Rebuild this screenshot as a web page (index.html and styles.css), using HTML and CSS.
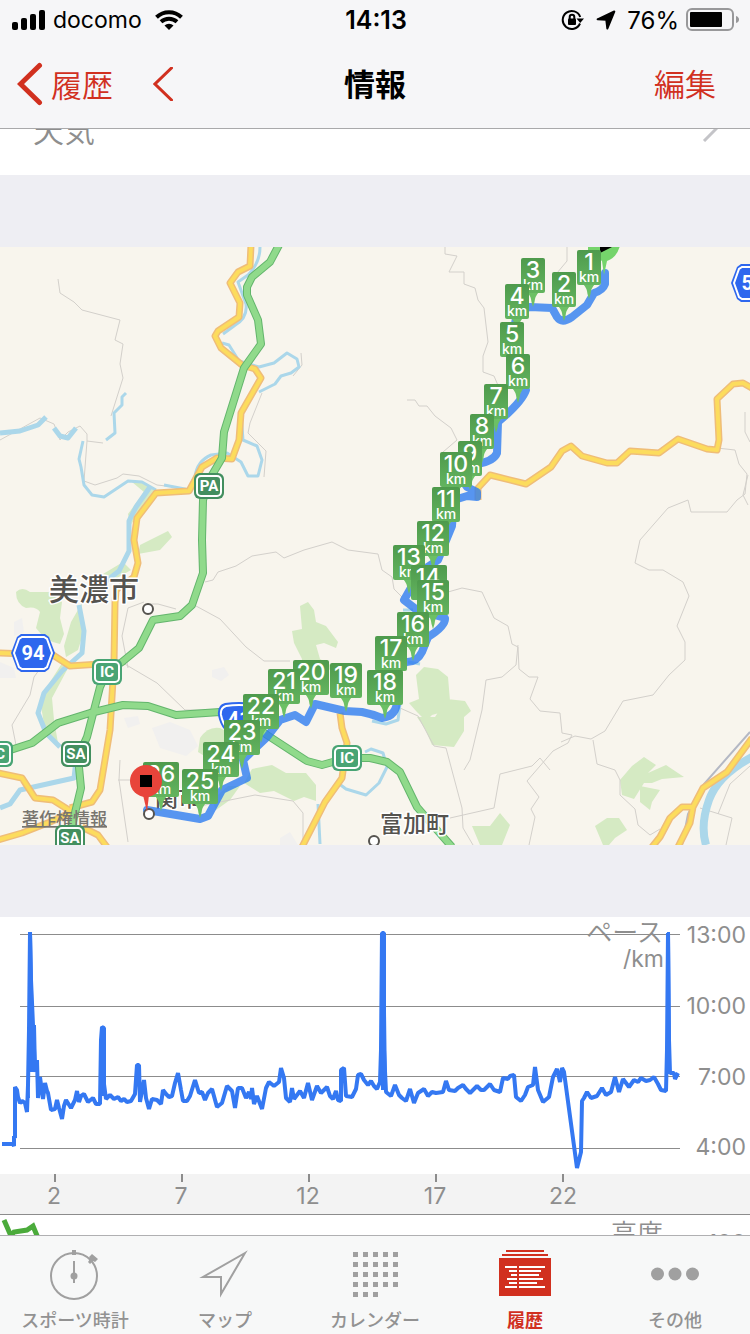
FILE: index.html
```html
<!DOCTYPE html>
<html lang="ja">
<head>
  <meta charset="UTF-8" />
  <meta name="viewport" content="width=device-width, initial-scale=1" />
  <title>情報</title>
  <link rel="stylesheet" href="styles.css">
</head>
<body>
  <header class="header">
    <div class="status">
      <div class="status-left">
        <svg width="34" height="22" viewBox="0 0 34 22" aria-hidden="true">
          <rect x="0" y="13" width="6" height="8" rx="2" />
          <rect x="9" y="9" width="6" height="12" rx="2" />
          <rect x="18" y="5" width="6" height="16" rx="2" />
          <rect x="27" y="1" width="6" height="20" rx="2" />
        </svg>
        <span class="carrier">docomo</span>
        <svg width="28" height="20" viewBox="0 0 28 20" aria-hidden="true">
          <path d="M14 20L9.500 15.500A6.500 6.500 0 0 1 18.500 15.500Z" />
          <path class="wave" d="M1.500 7.200A18 18 0 0 1 26.500 7.200M6 11.800A12 12 0 0 1 22 11.800" />
        </svg>
      </div>
      <time class="clock">14:13</time>
      <div class="status-right">
        <svg width="24" height="22" viewBox="0 0 24 22" aria-hidden="true">
          <path class="line" d="M19 14.500A9 9 0 1 1 19.200 8" />
          <path d="M15.500 9.500h7.500l-3.800 4.500z" />
          <rect x="7" y="9.500" width="8" height="6.500" rx="1" />
          <path class="line" d="M8.700 10V8a2.300 2.300 0 0 1 4.600 0v2" />
        </svg>
        <svg class="location" width="20" height="20" viewBox="0 0 20 20" aria-hidden="true">
          <path d="M18.300 1.500L11.300 18.500L10.300 9.800L1.600 9.300Z" />
        </svg>
        <span class="percent">76%</span>
        <svg width="54" height="24" viewBox="0 0 54 24" aria-hidden="true">
          <rect class="shell" x="1" y="1" width="46" height="21" rx="5" />
          <rect x="4" y="4" width="32" height="15" rx="1" />
          <path class="nub" d="M50 8q3 1 3 3.500t-3 3.500z" />
        </svg>
      </div>
    </div>
    <div class="nav">
      <div class="nav-left">
        <button class="nav-button back" type="button">
          <svg width="26" height="44" viewBox="0 0 26 44" aria-hidden="true"><path d="M22.500 3.500L3.500 22l19 18.500" /></svg>
          履歴
        </button>
        <button class="nav-button prev" type="button" aria-label="前へ">
          <svg width="20" height="34" viewBox="0 0 20 34" aria-hidden="true"><path d="M18.500 1L2 17l16.500 16" /></svg>
        </button>
      </div>
      <h1 class="title">情報</h1>
      <button class="nav-button edit" type="button">編集</button>
    </div>
  </header>

  <main class="content">
    <div class="scroll">
      <a class="row" href="#weather">
        天気
        <svg width="16" height="26" viewBox="0 0 16 26" aria-hidden="true"><path d="M2 1l12 12L2 25" /></svg>
      </a>

      <svg class="map" viewBox="0 247 750 598" role="img" aria-label="ルートマップ">
        <defs>
          <linearGradient id="flag" x1="0" y1="0" x2="0" y2="1">
            <stop offset="0" stop-color="#4e9a4c" />
            <stop offset="1" stop-color="#63b45f" />
          </linearGradient>
          <path id="tail" d="M-6 34H6Q2 38 1.500 44L0 49L-1.500 44Q-2 38 -6 34Z" />
        </defs>
        <rect class="land" y="247" width="750" height="598" />

        <!-- 市街地 -->
        <g class="town">
          <path d="M152 728l18-6 20 8 8 16-12 10-26-8z" />
          <path d="M212 670l12-3 5 8-8 6-9-4zM124 718l14-2 2 8-12 4z" />
          <path d="M0 662l14 6 2 10-16 0zM14 622l8-4 2 14-10 4zM280 838l10-6 8 13h-18z" />
        </g>

        <!-- 森 -->
        <g class="forest">
          <path d="M16 592q6-6 14 0l20 0 12 10-2 16 4 16-4 10q-14-2-24-16l4-16q-4-6-14-4-10-4-10-16z" />
          <path d="M82 603L71 622 64 646 66 657 78 650 83 634 80 618z" />
          <path d="M64 660L50 682 40 700 45 730 58 743 54 720 52 698 67 670z" />
          <path d="M103 574l20-12 8 8-14 8zM140 545l28-14 4 6-12 13-22 4z" />
          <path d="M132 482q14-2 24 10l-18 22-8 12-2-12 16-22z" />
          <path d="M300 606l8-4 6 8 2 12 10 4 12 16-2 6-12-5-8 2 4 14 14 8-10 6-24-2 2-12-8-16-2-12 10-2z" />
          <path d="M200 738q8-12 20-10l20 10-10 30-16-6-16-10z" />
          <path d="M252 769l20-4 14 8 20 0 10 12 0 16-12-4-10 4-20-10-14 2-16-10z" />
          <path d="M212 800l16-14 12 0-10 14-14 10z" />
          <path d="M416 675l8-8 14 2 10 8 2 24-4 10-14 4-6 6-10-10-7-8 10-4zM417 717l18 0 12-18 18 2 6 10-7 6 0 14-10 16-22-2-7-16z" />
          <path d="M620 780l12-14 12-9 12 8-8 8 18-8 18 12-22 2-10 4-8 0-10 16-12-4zM640 786l10 2 10 2-8 12-2 8-10-8z" />
          <path d="M472 826l18 0 10-13 10 12-8 20h-22zM595 826l12-8 12 0 8 12-12 8-6 7h-6z" />
        </g>

        <!-- 境界線 -->
        <g class="border">
          <path d="M58 279l2 14 14 9 8 8 38 10-5 20 8 4-3 20 3 14-12 38" />
          <path d="M0 440l40-22 14 6 6 16 8-8 12-6 7 8 0 7 16 2M87 441l-3 40 11 4 22-7 6-4 16 2 18 9 18 2 14 6" />
          <path d="M262 393l-12 30-2 10 18 18-2 26M301 353l1 12-9 11" />
          <path d="M205 582l8-2 5-8 18-6 16-10 24-4 8 6 20-8 28-8 16 8 30 4 4 16 10 7 2 12 8 8M196 606l24 13 26 28 18 14h26M148 604l10 0 18 5M128 668l-6-32 6-28 16-6M50 655l-16 22-4 18-18 30 4 20" />
          <path d="M123 663l34 20 28 27 40 0M118 780h18M120 760l-1 20 9 62M200 806l55-11 38 6 10 12v32" />
          <path d="M445 247v7l12 2-8 16h15v12l11 4 3 12 6 8 4 34-5 14v16l11 4 6 14M407 400l8 0 4 6 8 0 8 10 16 12 6 12-14 12M567 247l0 14-10 12" />
          <path d="M448 592l14-4 20 4 12 26 14 8 4 18 6 3 1 22 10 8 9 0-8 22 10 12 20 2 2 20 10 2-4 8-15 8-26 30 12 16-8 12 4 8-6 28" />
          <path d="M518 645l-2 20-14 12-16 3-4 30-12 50-6 10M400 708l18 8 16 30 12 2 16 60 1 20 10 17M450 818l44-10 6-34 32-8 8-8 10 12" />
          <path d="M640 540l-5 23 14 7 14 0 20 12 6 14-12 30 8 16v18l-16 15-16 20-30 6-18 30-14 8-16-3-14 6M593 740l4 24 18 6 5 10v15l15 14 3 16 12 10 10-6" />
          <path d="M640 540l28-32 20-8 3 12h36l10-12 8-6 2-20-8-10-4-14-18-2M745 412l0 20 5 10M748 475l-5 20 5 10M700 808l32 10-6 27M750 766l-20 18-12 30" />
        </g>

        <!-- 川 -->
        <g class="river">
          <path d="M260 247q0 16-12 28l-10 7 8 22q2 14-12 22l-11 8" />
          <path d="M222 343l7 2 10 16 20 6 15-4 13-10 10 6 2 8-8 6-10 3-6 8-16 8" />
          <path d="M241 413l2 27 14 6 5 14-4 16-10 0-7-14-14-9-16 2q-14 6-16 22" />
          <path d="M190 490l-26-5M156 490l-14-8-14-1-12 8-12 8-12-2-8-10-3-18-2-8 4-18" />
          <path class="wide" d="M0 433l20-2 18-6 8-8M54 428l6 8 8 2 8-10" />
          <path d="M126 393l-4 4 0 8-8 8 1 20-9 7" />
          <path class="wide" d="M150 487l-14 20-7 14v30l-10 20-28 22M79 605l5 26-2 22-20 18-18 22-6 20 8 20 14 14M0 808l10-4 10-14 54-12 2-18" />
          <path d="M400 704l-2 16-12 4-14-3M365 752l6-3 12 4 4 14-8 16-13 12-20-6-8-6M318 804l2 40M403 610l10 0M420 664l-12-2" />
          <path class="broad" d="M752 757Q718 775 709 800T706 845" />
        </g>
        <path class="rail" d="M750 732l-46 52-16 30-6 31" />

        <!-- 道路 -->
        <g>
          <path class="road-edge" d="M251 245L250 266L238 272L230 283L240 303L239 317L218 331L215 336L221 348L242 365L255 369L261 378L241 413L239 440L232 459L217 458L202 467L189 491L156 493L137 518L134 540L138 563L134 577L116 590L115 603L114 663L110 730L100 790L92 802L70 808M-2 773L22 778L35 798L53 800L72 812L50 822L22 833L-2 840M82 827L98 835L107 847M-2 653L53 655L70 666L100 664M478 500L478 488L490 475L526 484L551 467L562 451L571 446L582 456L607 463L617 463L630 451L659 453L678 439L707 449L717 450L719 440L717 399L733 384L743 383L752 388M340 713L342 728L347 743L342 778L325 802L302 847M752 738L727 772L703 788L693 807L690 823L678 847M693 807L682 807L670 818L660 837L652 847" />
          <path class="road" d="M251 245L250 266L238 272L230 283L240 303L239 317L218 331L215 336L221 348L242 365L255 369L261 378L241 413L239 440L232 459L217 458L202 467L189 491L156 493L137 518L134 540L138 563L134 577L116 590L115 603L114 663L110 730L100 790L92 802L70 808M-2 773L22 778L35 798L53 800L72 812L50 822L22 833L-2 840M82 827L98 835L107 847M-2 653L53 655L70 666L100 664M478 500L478 488L490 475L526 484L551 467L562 451L571 446L582 456L607 463L617 463L630 451L659 453L678 439L707 449L717 450L719 440L717 399L733 384L743 383L752 388M340 713L342 728L347 743L342 778L325 802L302 847M752 738L727 772L703 788L693 807L690 823L678 847M693 807L682 807L670 818L660 837L652 847" />
        </g>
        <g>
          <path class="highway-edge" d="M279 245L270 262L252 277L247 287L247 295L258 320L261 344L244 368L224 432L222 458L212 475L203 500L202 540L203 573L192 605L180 616L153 620L139 648L122 662L107 672L100 687L87 737L78 757L81 788L74 817L70 838M-2 754L32 743L58 723L90 713L123 705L148 706L176 715L220 712L250 722L267 735L307 761L322 765L347 758L370 758L387 762L400 772L417 807L437 830L452 847" />
          <path class="highway" d="M279 245L270 262L252 277L247 287L247 295L258 320L261 344L244 368L224 432L222 458L212 475L203 500L202 540L203 573L192 605L180 616L153 620L139 648L122 662L107 672L100 687L87 737L78 757L81 788L74 817L70 838M-2 754L32 743L58 723L90 713L123 705L148 706L176 715L220 712L250 722L267 735L307 761L322 765L347 758L370 758L387 762L400 772L417 807L437 830L452 847" />
        </g>

        <!-- 標識 -->
        <g class="shield pa" transform="translate(209 486)"><rect class="plate" x="-15" y="-13" width="30" height="26" rx="6" /><rect class="ring" x="-12" y="-10" width="24" height="20" rx="4" /><text y="5">PA</text></g>
        <g class="shield" transform="translate(107 672)"><rect class="plate" x="-15" y="-13" width="30" height="26" rx="6" /><rect class="ring" x="-12" y="-10" width="24" height="20" rx="4" /><text y="5">IC</text></g>
        <g class="shield" transform="translate(347 758)"><rect class="plate" x="-15" y="-13" width="30" height="26" rx="6" /><rect class="ring" x="-12" y="-10" width="24" height="20" rx="4" /><text y="5">IC</text></g>
        <g class="shield" transform="translate(-2 754)"><rect class="plate" x="-15" y="-13" width="30" height="26" rx="6" /><rect class="ring" x="-12" y="-10" width="24" height="20" rx="4" /><text y="5">IC</text></g>
        <g class="shield pa" transform="translate(76 754)"><rect class="plate" x="-15" y="-13" width="30" height="26" rx="6" /><rect class="ring" x="-12" y="-10" width="24" height="20" rx="4" /><text y="5">SA</text></g>

        <g class="number" transform="translate(33 653)">
          <path class="plate" d="M-12-19H12L16-16L22 0L16 16L12 19H-12L-16 16L-22 0L-16-16Z" />
          <path class="ring" d="M-11-16H11L14-14L19 0L14 14L11 16H-11L-14 14L-19 0L-14-14Z" />
          <text y="7">94</text>
        </g>
        <g class="number" transform="translate(753 283)">
          <path class="plate" d="M-12-19H12L16-16L22 0L16 16L12 19H-12L-16 16L-22 0L-16-16Z" />
          <path class="ring" d="M-11-16H11L14-14L19 0L14 14L11 16H-11L-14 14L-19 0L-14-14Z" />
          <text y="7">58</text>
        </g>
        <g class="number" transform="translate(239 719)">
          <path class="plate" d="M-14-16Q0-18 14-16Q22-14 21-4Q18 14 0 20Q-18 14-21-4Q-22-14-14-16Z" />
          <path class="ring" d="M-13-13Q0-15 13-13Q19-11 18-4Q15 12 0 17Q-15 12-18-4Q-19-11-13-13Z" />
          <text y="7">41</text>
        </g>

        <!-- 地名 -->
        <text class="city" x="49" y="600">美濃市</text>
        <text class="place" x="380" y="832">富加町</text>
        <text class="place" x="155" y="806">関市</text>
        <circle class="dot" cx="148" cy="609" r="5" />
        <circle class="dot" cx="374" cy="841" r="5" />
        <a href="#legal"><text class="legal" x="22" y="825">著作権情報</text></a>
        <g class="shield pa" transform="translate(70 838)"><rect class="plate" x="-15" y="-13" width="30" height="26" rx="6" /><rect class="ring" x="-12" y="-10" width="24" height="20" rx="4" /><text y="5">SA</text></g>

        <!-- 走行ルート -->
        <path class="route" d="M605 273L605 284Q603 290 594 293L587 305L572 317Q562 324 557 317L552 308L530 307L517 310L512 345L518 370L526 390Q522 402 498 422L497 453Q494 461 477 464L462 480L467 487L477 492L477 497L467 496L454 500L452 526L438 560L420 572L404 600L417 610L445 618Q446 626 428 637L422 652Q417 662 407 662L390 670L397 700Q397 716 382 718Q372 714 362 712L345 711L315 704L306 722L295 715L280 720L267 737L243 760L247 778L222 790L208 816L200 819L147 810" />
        <circle class="dot" cx="149" cy="814" r="5" />

        <g class="start">
          <path d="M588 240H621Q619 257 607 261L604 275L602 261L588 250Z" />
          <path class="mark" d="M600 247h12l-12 6z" />
        </g>

        <!-- 1kmごとの旗 -->
        <g class="km" transform="translate(589 250)"><use href="#tail" /><rect x="-12" width="24" height="35" rx="2" /><text y="20">1</text><text class="unit" y="32">km</text></g>
        <g class="km" transform="translate(564 272)"><use href="#tail" /><rect x="-12" width="24" height="35" rx="2" /><text y="20">2</text><text class="unit" y="32">km</text></g>
        <g class="km" transform="translate(533 258)"><use href="#tail" /><rect x="-12" width="24" height="35" rx="2" /><text y="20">3</text><text class="unit" y="32">km</text></g>
        <g class="km" transform="translate(517 284)"><use href="#tail" /><rect x="-12" width="24" height="35" rx="2" /><text y="20">4</text><text class="unit" y="32">km</text></g>
        <g class="km" transform="translate(512 322)"><use href="#tail" /><rect x="-12" width="24" height="35" rx="2" /><text y="20">5</text><text class="unit" y="32">km</text></g>
        <g class="km" transform="translate(518 354)"><use href="#tail" /><rect x="-12" width="24" height="35" rx="2" /><text y="20">6</text><text class="unit" y="32">km</text></g>
        <g class="km" transform="translate(496 384)"><use href="#tail" /><rect x="-12" width="24" height="35" rx="2" /><text y="20">7</text><text class="unit" y="32">km</text></g>
        <g class="km" transform="translate(482 414)"><use href="#tail" /><rect x="-12" width="24" height="35" rx="2" /><text y="20">8</text><text class="unit" y="32">km</text></g>
        <g class="km" transform="translate(470 441)"><use href="#tail" /><rect x="-12" width="24" height="35" rx="2" /><text y="20">9</text><text class="unit" y="32">km</text></g>
        <g class="km" transform="translate(456 452)"><use href="#tail" /><rect x="-16" width="32" height="35" rx="2" /><text y="20">10</text><text class="unit" y="32">km</text></g>
        <g class="km" transform="translate(446 487)"><use href="#tail" /><rect x="-14" width="28" height="35" rx="2" /><text y="20">11</text><text class="unit" y="32">km</text></g>
        <g class="km" transform="translate(433 521)"><use href="#tail" /><rect x="-16" width="32" height="35" rx="2" /><text y="20">12</text><text class="unit" y="32">km</text></g>
        <g class="km" transform="translate(409 545)"><use href="#tail" /><rect x="-16" width="32" height="35" rx="2" /><text y="20">13</text><text class="unit" y="32">km</text></g>
        <g class="km" transform="translate(428 565)"><use href="#tail" /><rect x="-17" width="36" height="35" rx="2" /><text y="20">14</text><text class="unit" y="32">km</text></g>
        <g class="km" transform="translate(433 580)"><use href="#tail" /><rect x="-16" width="32" height="35" rx="2" /><text y="20">15</text><text class="unit" y="32">km</text></g>
        <g class="km" transform="translate(413 612)"><use href="#tail" /><rect x="-16" width="32" height="35" rx="2" /><text y="20">16</text><text class="unit" y="32">km</text></g>
        <g class="km" transform="translate(391 636)"><use href="#tail" /><rect x="-16" width="32" height="35" rx="2" /><text y="20">17</text><text class="unit" y="32">km</text></g>
        <g class="km" transform="translate(385 670)"><use href="#tail" /><rect x="-18" width="36" height="35" rx="2" /><text y="20">18</text><text class="unit" y="32">km</text></g>
        <g class="km" transform="translate(346 663)"><use href="#tail" /><rect x="-16" width="32" height="35" rx="2" /><text y="20">19</text><text class="unit" y="32">km</text></g>
        <g class="km" transform="translate(311 660)"><use href="#tail" /><rect x="-18" width="36" height="35" rx="2" /><text y="20">20</text><text class="unit" y="32">km</text></g>
        <g class="km" transform="translate(284 669)"><use href="#tail" /><rect x="-16" width="32" height="35" rx="2" /><text y="20">21</text><text class="unit" y="32">km</text></g>
        <g class="km" transform="translate(261 694)"><use href="#tail" /><rect x="-18" width="36" height="35" rx="2" /><text y="20">22</text><text class="unit" y="32">km</text></g>
        <g class="km" transform="translate(242 720)"><use href="#tail" /><rect x="-18" width="36" height="35" rx="2" /><text y="20">23</text><text class="unit" y="32">km</text></g>
        <g class="km" transform="translate(221 742)"><use href="#tail" /><rect x="-18" width="36" height="35" rx="2" /><text y="20">24</text><text class="unit" y="32">km</text></g>
        <g class="km" transform="translate(200 769)"><use href="#tail" /><rect x="-18" width="36" height="35" rx="2" /><text y="20">25</text><text class="unit" y="32">km</text></g>
        <g class="km" transform="translate(161 762)"><use href="#tail" /><rect x="-18" width="36" height="35" rx="2" /><text y="20">26</text><text class="unit" y="32">km</text></g>

        <g class="goal">
          <path d="M143 795h6l-2 17z" />
          <circle cx="146" cy="781" r="16" />
          <rect class="mark" x="140" y="775" width="12" height="12" />
        </g>
      </svg>

      <svg class="chart" viewBox="0 917 750 298" role="img" aria-label="ペース">
        <rect class="axis" y="1174" width="750" height="40" />
        <path class="grid" d="M20 934.500H680M20 1006.500H680M20 1076.500H680M20 1148.500H680M0 1214.500H750" />
        <path class="tick" d="M55 1174v8M182 1174v8M309 1174v8M436 1174v8M563 1174v8" />
        <text class="label kana" x="663" y="942">ペース</text>
        <text class="label" x="664" y="967">/km</text>
        <path class="spike" d="M28 932H32L33 980L35 1025L37 1072H29L30 1098H28ZM101 1026h3v70h-3zM381 932H385L387 1090H381ZM667 932H670L671 1074H667Z" />
        <polyline class="pace" points="2,1144 13,1144 14,1146 14,1136 15,1138 15,1087 17,1090 18,1097 20,1103 22,1101 25,1103 27,1112 28,1085 29,1030 30,933 31,990 32,1072 34,1025 35,1072 37,1060 38,1098 40,1077 43,1099 45,1083 47,1091 48,1093 51,1110 55,1109 57,1100 59,1108 62,1119 64,1106 66,1100 71,1108 75,1100 77,1091 79,1102 81,1096 84,1094 88,1102 93,1098 96,1104 100,1104 101,1040 102,1027 104,1028 104,1084 106,1099 110,1095 114,1099 118,1097 121,1101 124,1099 127,1102 131,1101 135,1094 137,1065 139,1065 140,1102 144,1080 146,1098 149,1109 152,1099 157,1100 161,1104 163,1090 166,1094 169,1097 172,1096 175,1083 178,1073 181,1090 183,1101 187,1101 190,1096 195,1080 199,1093 202,1092 205,1100 208,1093 212,1089 217,1107 222,1103 227,1086 232,1091 235,1108 238,1088 242,1088 246,1098 249,1092 251,1099 252,1088 254,1104 257,1096 262,1109 266,1088 269,1082 274,1086 279,1082 281,1068 284,1078 286,1098 290,1102 292,1088 294,1099 300,1091 304,1098 308,1083 312,1100 317,1086 321,1093 327,1087 330,1096 333,1099 336,1091 338,1100 341,1101 341,1070 344,1068 346,1096 352,1097 356,1089 358,1075 361,1074 364,1080 368,1085 371,1081 374,1086 377,1089 380,1082 381,1050 382,933 384,933 384,1050 386,1092 391,1096 395,1085 399,1095 402,1098 406,1101 410,1089 414,1103 418,1093 424,1089 428,1096 432,1092 436,1093 443,1092 446,1081 449,1090 455,1091 458,1088 463,1085 466,1089 470,1093 477,1086 481,1090 484,1090 490,1084 494,1090 500,1092 503,1078 508,1079 510,1076 514,1075 516,1097 521,1101 525,1095 528,1087 533,1085 535,1067 538,1090 543,1102 549,1097 553,1077 557,1069 560,1082 562,1068 564,1072 577,1168 581,1152 582,1101 584,1098 587,1092 591,1098 597,1096 602,1088 606,1095 611,1092 615,1077 619,1092 623,1079 629,1087 634,1080 638,1082 641,1078 646,1081 650,1080 654,1077 658,1084 661,1090 666,1091 667,1050 668,933 669,1040 670,1073 674,1073 675,1079 678,1073" />
        <g class="label">
          <text x="746" y="943">13:00</text>
          <text x="746" y="1014">10:00</text>
          <text x="746" y="1085">7:00</text>
          <text x="746" y="1155">4:00</text>
        </g>
        <g class="label distance">
          <text x="54" y="1204">2</text>
          <text x="181" y="1204">7</text>
          <text x="308" y="1204">12</text>
          <text x="435" y="1204">17</text>
          <text x="563" y="1204">22</text>
        </g>
      </svg>

      <svg class="chart" viewBox="0 1215 750 298" role="img" aria-label="高度">
        <polyline class="altitude" points="4,1220 11,1236 14,1232 27,1230 33,1226 38,1238" />
        <text class="label kana" x="663" y="1243">高度</text>
        <text class="label" x="746" y="1251">100</text>
      </svg>
    </div>
  </main>

  <nav class="tabs">
    <a class="tab" href="#stopwatch">
      <svg width="52" height="50" viewBox="0 0 52 50" aria-hidden="true">
        <circle class="outline" cx="25" cy="26" r="23" />
        <path d="M23 0h4v5h-4zM24 11h2v22h-2zM40 7l3-3 6 5-3 3-2-1-3 3-2-2 2-3z" />
        <circle cx="25" cy="26" r="3.500" />
      </svg>
      スポーツ時計
    </a>
    <a class="tab" href="#map">
      <svg width="52" height="50" viewBox="0 0 52 50" aria-hidden="true"><path class="outline" d="M46 3L4 27H22V44Z" /></svg>
      マップ
    </a>
    <a class="tab" href="#calendar">
      <svg width="52" height="50" viewBox="0 0 52 50" aria-hidden="true">
        <path class="dots" d="M4 4.500H50M4 14.500H50M4 24.500H50M4 34.500H50" />
        <path class="dots" d="M4 44.500H30" />
      </svg>
      カレンダー
    </a>
    <a class="tab active" href="#history" aria-current="page">
      <svg width="52" height="50" viewBox="0 0 52 50" aria-hidden="true">
        <path d="M7 0h38v2H7zM3 4h46v2H3zM0 8h52v38H0z" />
        <path class="rows" d="M6 17H46M10 21H42M12 25H40M8 29H44M10 33H38M6 37H46" />
        <path class="gap" d="M19 14V39" />
      </svg>
      履歴
    </a>
    <a class="tab" href="#more">
      <svg width="52" height="50" viewBox="0 0 52 50" aria-hidden="true">
        <circle cx="8.500" cy="24" r="6.500" /><circle cx="26" cy="24" r="6.500" /><circle cx="43.500" cy="24" r="6.500" />
      </svg>
      その他
    </a>
  </nav>
</body>
</html>
```
FILE: styles.css
```css
:root {
  --red: #d1301f;
  --gray: #8e8e8e;
  --bar: #f6f6f8;
  --group: #eeeef3;
}

* {
  margin: 0;
  padding: 0;
  box-sizing: border-box;
}

body {
  height: 100vh;
  display: flex;
  flex-direction: column;
  background: var(--group);
  color: #000;
  font-family: Inter, "Noto Sans CJK JP", sans-serif;
}

a {
  color: inherit;
  text-decoration: none;
}

svg {
  display: block;
  flex: none;
}

/* ヘッダー */
.header {
  background: var(--bar);
  border-bottom: 1px solid #a9a9ab;
}

.status {
  display: grid;
  grid-template-columns: 1fr auto 1fr;
  align-items: center;
  height: 40px;
  padding: 0 10px 0 12px;
  font-size: 24px;
}
.status-left,
.status-right {
  display: flex;
  align-items: center;
}
.status-left {
  gap: 7px;
}
.status-right {
  justify-content: flex-end;
  gap: 7px;
}
.carrier {
  margin-right: 6px;
  font-size: 23px;
}
.clock {
  font-size: 25px;
  font-weight: 600;
}
.location {
  margin: 0 4px;
}
.location path {
  stroke: #000;
  stroke-width: 2;
  stroke-linejoin: round;
}
.wave,
.line {
  fill: none;
  stroke: #000;
  stroke-width: 4;
}
.line {
  stroke-width: 2;
}
.shell {
  fill: none;
  stroke: #98989a;
  stroke-width: 2;
}
.nub {
  fill: #98989a;
}

.nav {
  display: grid;
  grid-template-columns: 1fr auto 1fr;
  align-items: center;
  height: 88px;
  padding: 0 17px;
}
.nav-left {
  display: flex;
  align-items: center;
  gap: 40px;
}
.nav-button {
  display: flex;
  align-items: center;
  gap: 8px;
  border: 0;
  background: none;
  color: var(--red);
  font: 350 31px/40px "Noto Sans CJK JP", sans-serif;
  cursor: pointer;
}
.nav-button path {
  fill: none;
  stroke: currentColor;
  stroke-width: 5;
  stroke-linecap: round;
}
.prev path {
  stroke-width: 3;
}
.edit {
  justify-self: end;
  padding-right: 17px;
}
.title {
  font: 700 31px/40px "Noto Sans CJK JP", sans-serif;
}
.title,
.edit {
  padding-bottom: 2px;
}

/* スクロール領域 */
.content {
  flex: 1;
  min-height: 0;
  overflow: hidden;
}
.scroll {
  margin-top: -42px;
}

.row {
  display: flex;
  align-items: center;
  justify-content: space-between;
  height: 88px;
  padding: 0 32px 4px 33px;
  background: #fff;
  color: var(--gray);
  font: 350 31px/40px "Noto Sans CJK JP", sans-serif;
}
.row path {
  fill: none;
  stroke: #c4c4c8;
  stroke-width: 3;
}

/* マップ */
.map {
  width: 100%;
  height: auto;
  margin: 72px 0;
}
.land { fill: #f8f5ed; }
.town { fill: #f1f0ef; }
.forest { fill: #d5eac3; }
.border {
  fill: none;
  stroke: #d3d0cb;
  stroke-width: 1;
}
.river {
  fill: none;
  stroke: #abd7ea;
  stroke-width: 3;
  stroke-linejoin: round;
}
.river .wide { stroke-width: 5; }
.river .broad { stroke-width: 8; }
.rail {
  fill: none;
  stroke: #b4b8c4;
  stroke-width: 2;
}
.road-edge,
.road,
.highway-edge,
.highway {
  fill: none;
  stroke-linejoin: round;
}
.road-edge {
  stroke: #efbd78;
  stroke-width: 7;
}
.road {
  stroke: #fcdc5d;
  stroke-width: 4;
}
.highway-edge {
  stroke: #63b56c;
  stroke-width: 8;
}
.highway {
  stroke: #90da8b;
  stroke-width: 6;
}

.shield text,
.number text {
  fill: #fff;
  font: 700 15px "Liberation Sans Narrow", Roboto, sans-serif;
  text-anchor: middle;
}
.number text {
  font: 700 20px Roboto, sans-serif;
}
.plate { fill: #48a474; }
.pa .plate { fill: #438f5f; }
.number .plate { fill: #2e67ee; }
.ring {
  fill: none;
  stroke: #fff;
  stroke-width: 2;
}

.city,
.place,
.legal {
  fill: #55534f;
  font-family: "Noto Sans CJK JP", sans-serif;
  font-weight: 500;
  stroke: #fff;
  stroke-width: 3;
  stroke-linejoin: round;
  paint-order: stroke;
}
.city {
  font-size: 30px;
}
.place {
  font-size: 23px;
}
.legal {
  font-size: 17px;
  fill: #78756f;
  stroke: none;
  text-decoration: underline;
}
.dot {
  fill: #fff;
  stroke: #55534f;
  stroke-width: 2;
}

.route {
  fill: none;
  stroke: #2e7df0;
  stroke-width: 8;
  stroke-linejoin: round;
  stroke-linecap: round;
  opacity: 0.8;
}
.km { fill: #6cc065; }
.km rect { fill: url(#flag); }
.km text {
  fill: #fff;
  font-size: 23px;
  font-weight: 500;
  text-anchor: middle;
}
.km .unit {
  font-size: 14px;
}
.start { fill: #75d46b; }
.goal { fill: #e8443a; }
.goal .mark,
.start .mark { fill: #000; }

/* グラフ */
.chart {
  width: 100%;
  height: auto;
  background: #fff;
}
.axis { fill: #f3f3f3; }
.grid {
  stroke: #8c8c8c;
  stroke-width: 1;
}
.tick {
  stroke: #8c8c8c;
  stroke-width: 2;
}
.pace {
  fill: none;
  stroke: #3478f2;
  stroke-width: 4;
  stroke-linejoin: bevel;
}
.spike { fill: #3478f2; }
.altitude {
  fill: none;
  stroke: #4bab3b;
  stroke-width: 5;
}
.label {
  fill: var(--gray);
  font-size: 23px;
  text-anchor: end;
}
.kana {
  font-family: "Noto Sans CJK JP", sans-serif;
  font-size: 26px;
  font-weight: 350;
}
.distance { text-anchor: middle; }

/* タブバー */
.tabs {
  display: flex;
  height: 99px;
  border-top: 1px solid #b0b0b2;
  background: #f7f8f8;
}
.tab {
  flex: 1;
  display: flex;
  flex-direction: column;
  align-items: center;
  gap: 7px;
  padding-top: 14px;
  color: #929292;
  fill: #a0a0a0;
  font: 500 18px/24px "Noto Sans CJK JP", sans-serif;
}
.tab.active {
  color: var(--red);
  fill: var(--red);
  font-weight: 700;
}
.outline {
  fill: none;
  stroke: #a0a0a0;
  stroke-width: 2;
}
.dots {
  stroke: #a0a0a0;
  stroke-width: 5;
  stroke-dasharray: 5 5;
}
.rows {
  stroke: #fff;
  stroke-width: 2;
}
.gap {
  stroke: var(--red);
  stroke-width: 2;
}
```
